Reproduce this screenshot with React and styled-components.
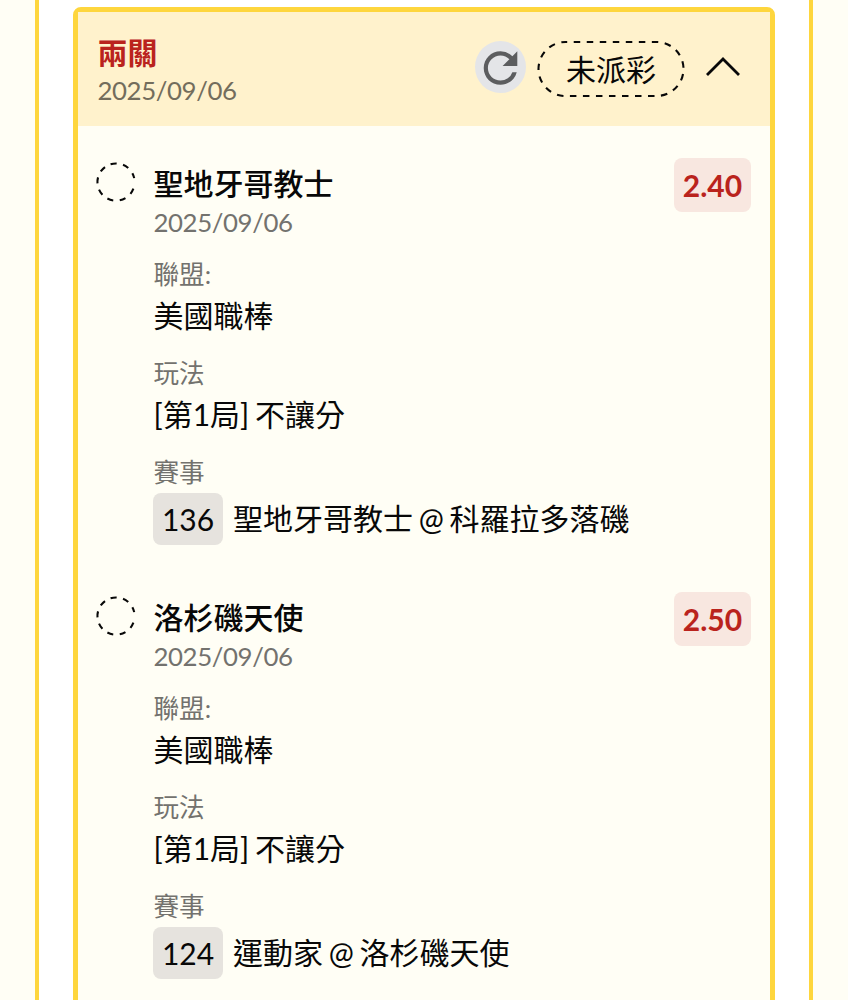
import React from "react";
import styled, { createGlobalStyle } from "styled-components";

const bets = [
    { team: "聖地牙哥教士", date: "2025/09/06", odds: "2.40", league: "美國職棒", play: "[第1局] 不讓分", no: "136", match: "聖地牙哥教士 @ 科羅拉多落磯" },
    { team: "洛杉磯天使", date: "2025/09/06", odds: "2.50", league: "美國職棒", play: "[第1局] 不讓分", no: "124", match: "運動家 @ 洛杉磯天使" },
];

function RefreshIcon() {
    return (
        <svg width="51" height="52" viewBox="0 0 51 52" fill="#5c5d5f">
            <path transform="translate(0.3 1.8) scale(2.1)" d="M17.65 6.35A7.96 7.96 0 0 0 12 4c-4.42 0-7.99 3.58-7.99 8s3.57 8 7.99 8c3.73 0 6.84-2.55 7.73-6h-2.08A5.99 5.99 0 0 1 12 18c-3.31 0-6-2.69-6-6s2.69-6 6-6c1.66 0 3.14.69 4.22 1.78L13 11h7V4l-2.35 2.35z"/>
        </svg>
    );
}

function BetItem({ bet }) {
    return (
        <Item>
            <StatusCircle viewBox="0 0 40 40">
                <path d="M37.4 26.7 A18.6 18.6 0 1 1 38.2 16.1" fill="none" stroke="#080808" strokeWidth="2.1" strokeDasharray="6 6.5"/>
            </StatusCircle>
            <ItemBody>
                <Team>{bet.team}</Team>
                <DateText>{bet.date}</DateText>
                <Field>
                    <Label>聯盟:</Label>
                    <Value>{bet.league}</Value>
                </Field>
                <Field>
                    <Label>玩法</Label>
                    <Value>{bet.play}</Value>
                </Field>
                <Field>
                    <Label>賽事</Label>
                    <MatchRow>
                        <MatchNo>{bet.no}</MatchNo>
                        <Value>{bet.match}</Value>
                    </MatchRow>
                </Field>
            </ItemBody>
            <Odds>{bet.odds}</Odds>
        </Item>
    );
}

function App() {
    return (
        <Page>
            <GlobalStyle/>
            <Panel>
                <Card>
                    <CardHeader>
                        <HeaderInfo>
                            <CardTitle>兩關</CardTitle>
                            <HeaderDate>2025/09/06</HeaderDate>
                        </HeaderInfo>
                        <RefreshButton><RefreshIcon/></RefreshButton>
                        <StatusPill>
                            <PillOutline viewBox="0 0 148 58">
                                <rect x="1.5" y="2" width="145" height="54" rx="27" fill="none" stroke="#080808" strokeWidth="2.1" strokeDasharray="6.5 6.52" strokeDashoffset="4.8"/>
                            </PillOutline>
                            未派彩
                        </StatusPill>
                        <Chevron viewBox="0 0 36 22">
                            <path d="M2 19 L18 3 L34 19" fill="none" stroke="#080808" strokeWidth="2.8"/>
                        </Chevron>
                    </CardHeader>
                    <ItemList>
                        {bets.map((bet) => <BetItem key={bet.no} bet={bet}/>)}
                    </ItemList>
                </Card>
            </Panel>
        </Page>
    );
}

const GlobalStyle = createGlobalStyle`
    body {
        margin: 0;
        font-family: Lato, "Noto Sans CJK TC", sans-serif;
        color: #080808;
    }
    * {
        box-sizing: border-box;
    }
    button {
        font: inherit;
    }
`

const Page = styled.div`
    height: 1000px;
    padding: 0 35px;
    overflow: hidden;
    background-color: #fffef5;
`

const Panel = styled.div`
    height: 1100px;
    padding: 7px 34px 0;
    border: solid #fed63d;
    border-width: 0 4px;
    background-color: #fff;
`

const Card = styled.div`
    height: 1080px;
    border: 5px solid #fed63d;
    border-radius: 8px;
    background-color: #fffef5;
`

const CardHeader = styled.div`
    display: flex;
    height: 114px;
    padding: 21px 29px 0 19.5px;
    background-color: #fff2cc;
`

const HeaderInfo = styled.div`
    flex: 1;
`

const CardTitle = styled.div`
    font-size: 30px;
    font-weight: 700;
    line-height: 38px;
    color: #ba231d;
`

const DateText = styled.div`
    font-size: 25.8px;
    letter-spacing: -0.4px;
    line-height: 38px;
    color: #73726e;
`

const HeaderDate = styled(DateText)`
    color: #736d5c;
`

const RefreshButton = styled.button`
    width: 51px;
    height: 52px;
    margin: 8px 11px 0 0;
    padding: 0;
    border: none;
    border-radius: 50%;
    background-color: #e4e5e8;
`

const StatusPill = styled.div`
    position: relative;
    width: 148px;
    height: 58px;
    margin-top: 7px;
    font-size: 30px;
    line-height: 58px;
    text-align: center;
`

const PillOutline = styled.svg`
    position: absolute;
    top: 0;
    left: 0;
    width: 148px;
    height: 58px;
`

const Chevron = styled.svg`
    width: 36px;
    height: 22px;
    margin: 23px 0 0 20px;
`

const ItemList = styled.div`
    padding: 32px 19px 0 18px;
`

const Item = styled.div`
    display: flex;
    align-items: flex-start;
    height: 434px;
`

const StatusCircle = styled.svg`
    width: 40px;
    height: 40px;
    margin: 4px 17.5px 0 0;
`

const ItemBody = styled.div`
    flex: 1;
    padding-top: 6px;
`

const Team = styled.div`
    height: 39px;
    font-size: 30px;
    font-weight: 500;
    line-height: 38px;
`

const Field = styled.div`
    height: 99px;
    padding-top: 14px;
`

const Label = styled.div`
    font-size: 25.6px;
    line-height: 38px;
    color: #73726e;
`

const Value = styled.div`
    font-size: 30px;
    line-height: 44px;
    word-spacing: -2px;
    white-space: nowrap;
`

const MatchRow = styled.div`
    display: flex;
    align-items: flex-start;
    gap: 10px;
    margin-left: -0.5px;
    padding-top: 2px;

    ${Value} {
        padding-top: 3px;
    }
`

const MatchNo = styled.div`
    width: 70px;
    height: 52px;
    border-radius: 8px;
    font-size: 30px;
    line-height: 53px;
    text-align: center;
    background-color: #e6e3de;
`

const Odds = styled.div`
    width: 77px;
    height: 54px;
    border-radius: 8px;
    font-size: 30px;
    font-weight: 700;
    line-height: 55px;
    text-align: center;
    color: #ba231d;
    background-color: #f8e7e0;
`

export default App;
